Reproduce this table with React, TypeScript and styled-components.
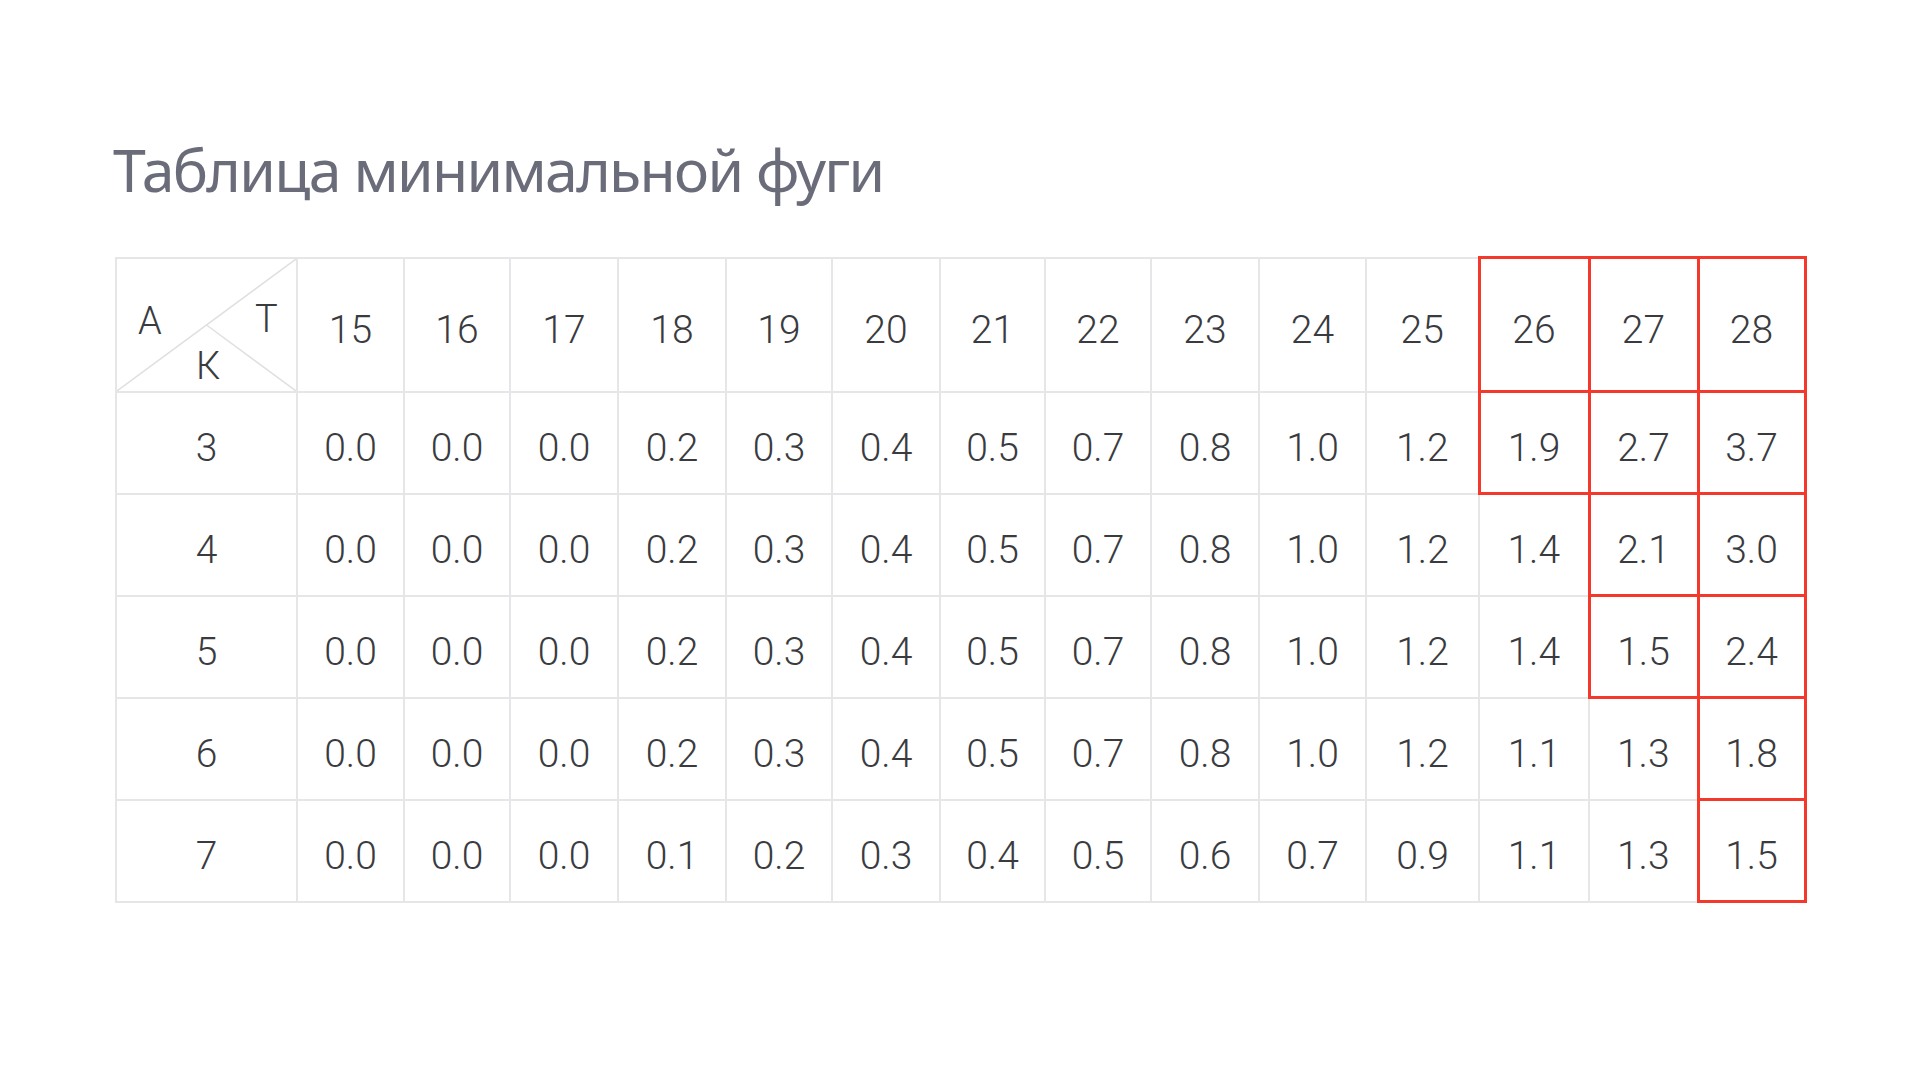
import React from "react";
import styled, { createGlobalStyle, css } from "styled-components";

const GlobalStyle = createGlobalStyle`
  html, body {
    margin: 0;
    padding: 0;
    background: #ffffff;
  }
  body {
    font-family: "Noto Sans", "Open Sans", sans-serif;
  }
`;

const Page = styled.main`
  width: 1920px;
  height: 1080px;
  box-sizing: border-box;
  padding: 132px 0 0 115px;
  background: #ffffff;
  display: flex;
  flex-direction: column;
`;

const Title = styled.h1`
  margin: 0 0 0 -2px;
  font-family: "Noto Sans", "Open Sans", sans-serif;
  font-weight: 400;
  font-size: 59px;
  line-height: 74px;
  letter-spacing: -1.7px;
  color: #6b6c7a;
`;

const Table = styled.table`
  margin-top: 50px;
  border-collapse: collapse;
  table-layout: fixed;
  width: 1689px;
  font-family: Roboto, "Noto Sans", sans-serif;
  font-weight: 300;
  color: #3a3b3f;
`;

const Row = styled.tr<{ $head?: boolean }>`
  height: ${(p) => (p.$head ? 134 : 102)}px;
`;

const Cell = styled.td<{ $red?: boolean }>`
  box-sizing: border-box;
  padding: 12px 0 0;
  text-align: center;
  vertical-align: middle;
  font-size: 39px;
  line-height: 1;
  border: 2px solid #e6e6e8;
  ${(p) =>
    p.$red &&
    css`
      border: 3px solid #f5382c;
    `}
`;

const Corner = styled.td`
  position: relative;
  padding: 0;
  border: 2px solid #e6e6e8;
`;

const Diagonal = styled.svg`
  position: absolute;
  inset: 0;
  width: 100%;
  height: 100%;
  display: block;
`;

const CornerLabel = styled.span<{ $left: number; $top: number }>`
  position: absolute;
  left: ${(p) => p.$left}px;
  top: ${(p) => p.$top}px;
  font-size: 38px;
  line-height: 1;
  color: #3a3b3f;
`;

const columns = [15, 16, 17, 18, 19, 20, 21, 22, 23, 24, 25, 26, 27, 28];
const widths = [181, 107, 106, 108, 108, 106, 108, 105, 106, 108, 107, 113, 110, 109, 107];

const rows: { k: number; values: string[] }[] = [
  { k: 3, values: ["0.0", "0.0", "0.0", "0.2", "0.3", "0.4", "0.5", "0.7", "0.8", "1.0", "1.2", "1.9", "2.7", "3.7"] },
  { k: 4, values: ["0.0", "0.0", "0.0", "0.2", "0.3", "0.4", "0.5", "0.7", "0.8", "1.0", "1.2", "1.4", "2.1", "3.0"] },
  { k: 5, values: ["0.0", "0.0", "0.0", "0.2", "0.3", "0.4", "0.5", "0.7", "0.8", "1.0", "1.2", "1.4", "1.5", "2.4"] },
  { k: 6, values: ["0.0", "0.0", "0.0", "0.2", "0.3", "0.4", "0.5", "0.7", "0.8", "1.0", "1.2", "1.1", "1.3", "1.8"] },
  { k: 7, values: ["0.0", "0.0", "0.0", "0.1", "0.2", "0.3", "0.4", "0.5", "0.6", "0.7", "0.9", "1.1", "1.3", "1.5"] },
];

// first red column index per data row (column index within values)
const redFrom: Record<number, number> = { 3: 11, 4: 12, 5: 12, 6: 13, 7: 13 };

export default function App() {
  return (
    <>
      <GlobalStyle />
      <Page>
        <Title>Таблица минимальной фуги</Title>
        <Table>
          <colgroup>
            {widths.map((w, i) => (
              <col key={i} style={{ width: w }} />
            ))}
          </colgroup>
          <tbody>
            <Row $head>
              <Corner>
                <Diagonal viewBox="0 0 181 134" preserveAspectRatio="none">
                  <line x1="0" y1="134" x2="181" y2="0" stroke="#e0e0e2" strokeWidth="1.5" />
                  <line x1="90.5" y1="67" x2="181" y2="134" stroke="#e0e0e2" strokeWidth="1.5" />
                </Diagonal>
                <CornerLabel $left={21} $top={43}>А</CornerLabel>
                <CornerLabel $left={138} $top={41}>Т</CornerLabel>
                <CornerLabel $left={79} $top={88}>К</CornerLabel>
              </Corner>
              {columns.map((c, i) => (
                <Cell key={c} $red={i >= 11}>
                  {c}
                </Cell>
              ))}
            </Row>
            {rows.map((r) => (
              <Row key={r.k}>
                <Cell>{r.k}</Cell>
                {r.values.map((v, i) => (
                  <Cell key={i} $red={i >= redFrom[r.k]}>
                    {v}
                  </Cell>
                ))}
              </Row>
            ))}
          </tbody>
        </Table>
      </Page>
    </>
  );
}
